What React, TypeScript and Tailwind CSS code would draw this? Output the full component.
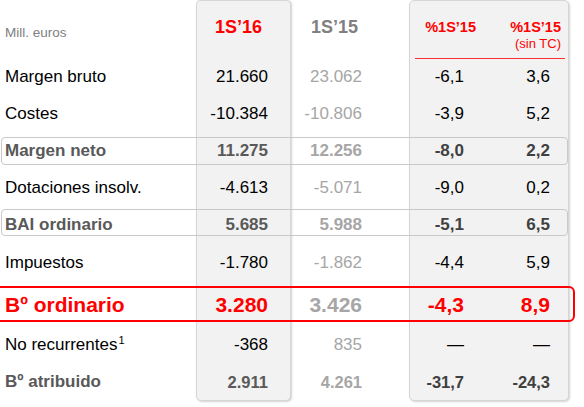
// App.tsx
// Results table: Mill. euros, 1S'16 vs 1S'15 with % change columns

const ROW_START = [
  'row-start-1',
  'row-start-2',
  'row-start-3',
  'row-start-4',
  'row-start-5',
  'row-start-6',
  'row-start-7',
  'row-start-8',
  'row-start-9',
  'row-start-10',
]

type Kind = 'normal' | 'bold' | 'total' | 'small'

interface Line {
  label: React.ReactNode
  a: string
  b: string
  p1: string
  p2: string
  kind: Kind
}

const lines: Line[] = [
  { label: 'Margen bruto', a: '21.660', b: '23.062', p1: '-6,1', p2: '3,6', kind: 'normal' },
  { label: 'Costes', a: '-10.384', b: '-10.806', p1: '-3,9', p2: '5,2', kind: 'normal' },
  { label: 'Margen neto', a: '11.275', b: '12.256', p1: '-8,0', p2: '2,2', kind: 'bold' },
  { label: 'Dotaciones insolv.', a: '-4.613', b: '-5.071', p1: '-9,0', p2: '0,2', kind: 'normal' },
  { label: 'BAI ordinario', a: '5.685', b: '5.988', p1: '-5,1', p2: '6,5', kind: 'bold' },
  { label: 'Impuestos', a: '-1.780', b: '-1.862', p1: '-4,4', p2: '5,9', kind: 'normal' },
  { label: 'Bº ordinario', a: '3.280', b: '3.426', p1: '-4,3', p2: '8,9', kind: 'total' },
  {
    label: (
      <span>
        No recurrentes<span className="text-[11px] leading-none align-[6px] ml-[1px]">1</span>
      </span>
    ),
    a: '-368',
    b: '835',
    p1: '—',
    p2: '—',
    kind: 'normal',
  },
  { label: 'Bº atribuido', a: '2.911', b: '4.261', p1: '-31,7', p2: '-24,3', kind: 'small' },
]

export default function App() {
  return (
    <div
      className="w-[584px] h-[407px] bg-white overflow-hidden"
      style={{ fontFamily: '"Liberation Sans", Arial, sans-serif' }}
    >
      <div className="grid grid-cols-[196px_95px_118px_81px_79px_1fr] grid-rows-[59px_36px_37px_37px_37px_37px_39px_45px_36px_38px]">
        {/* column panels */}
        <div className="col-start-2 row-start-1 row-span-10 bg-[#f2f2f2] border border-[#d6d6d6] rounded-b-[5px] rounded-t-[4px] shadow-[1px_1px_2px_rgba(0,0,0,0.18)]" />
        <div className="col-start-4 col-span-2 row-start-1 row-span-10 bg-[#f2f2f2] border border-[#d6d6d6] rounded-[5px] shadow-[1px_1px_2px_rgba(0,0,0,0.18)]" />

        {/* row outlines */}
        <div className="col-start-1 col-span-5 row-start-4 self-start mt-[5px] h-[28px] ml-[1px] mr-[1px] border border-[#c9c9c9] rounded-[4px]" />
        <div className="col-start-1 col-span-5 row-start-6 self-start mt-[3px] h-[27px] ml-[1px] mr-[1px] border border-[#c9c9c9] rounded-[4px]" />
        <div className="col-start-1 col-span-6 row-start-8 self-start mt-[4px] h-[36px] -ml-[8px] mr-[9px] border-2 border-[#ff0000] rounded-[6px]" />

        {/* header */}
        <div className="col-start-1 row-start-1 pl-[5px] pt-[23px] text-[13.5px] text-[#808080]">
          Mill. euros
        </div>
        <div className="col-start-2 row-start-1 text-right pr-[29px] pt-[17px] text-[18px] font-bold text-[#ff0000] leading-[20px]">
          1S’16
        </div>
        <div className="col-start-3 row-start-1 text-right pr-[51px] pt-[17px] text-[18px] font-bold text-[#808080] leading-[20px]">
          1S’15
        </div>
        <div className="col-start-4 row-start-1 text-right pr-[14px] pt-[19px] text-[14.5px] font-bold text-[#ff0000] leading-[17px]">
          %1S’15
        </div>
        <div className="col-start-5 row-start-1 text-right pr-[8px] pt-[19px] text-[#ff0000] leading-[17px]">
          <div className="text-[14.5px] font-bold">%1S’15</div>
          <div className="text-[13px] leading-[15px]">(sin TC)</div>
        </div>
        <div className="col-start-4 col-span-2 row-start-1 self-end ml-[6px] mr-[4px] h-px bg-[#ff3030]" />

        {lines.map((l, i) => (
          <Row key={i} line={l} row={ROW_START[i + 1]} />
        ))}
      </div>
    </div>
  )
}

function Row({ line, row }: { line: Line; row: string }) {
  const { kind } = line
  const size = kind === 'total' ? 'text-[21px] font-bold' : kind === 'normal' ? 'text-[17px]' : 'text-[17px] font-bold'
  const labelColor = kind === 'total' ? 'text-[#ff0000]' : kind === 'normal' ? 'text-black' : 'text-[#595959]'
  const aColor = kind === 'total' ? 'text-[#ff0000]' : kind === 'normal' ? 'text-black' : 'text-[#595959]'
  const bColor = 'text-[#a6a6a6]'
  const pColor = kind === 'total' ? 'text-[#ff0000]' : kind === 'normal' ? 'text-black' : 'text-[#404040]'
  const valueSize = kind === 'small' ? 'text-[16.5px] font-bold' : size

  return (
    <>
      <div className={`col-start-1 ${row} flex items-center pl-[5px] whitespace-nowrap ${size} ${labelColor}`}>
        {line.label}
      </div>
      <div className={`col-start-2 ${row} flex items-center justify-end pr-[23px] ${valueSize} ${aColor}`}>
        {line.a}
      </div>
      <div className={`col-start-3 ${row} flex items-center justify-end pr-[47px] ${valueSize} ${bColor}`}>
        {line.b}
      </div>
      <div className={`col-start-4 ${row} flex items-center justify-end pr-[26px] ${valueSize} ${pColor}`}>
        {line.p1}
      </div>
      <div className={`col-start-5 ${row} flex items-center justify-end pr-[19px] ${valueSize} ${pColor}`}>
        {line.p2}
      </div>
    </>
  )
}
